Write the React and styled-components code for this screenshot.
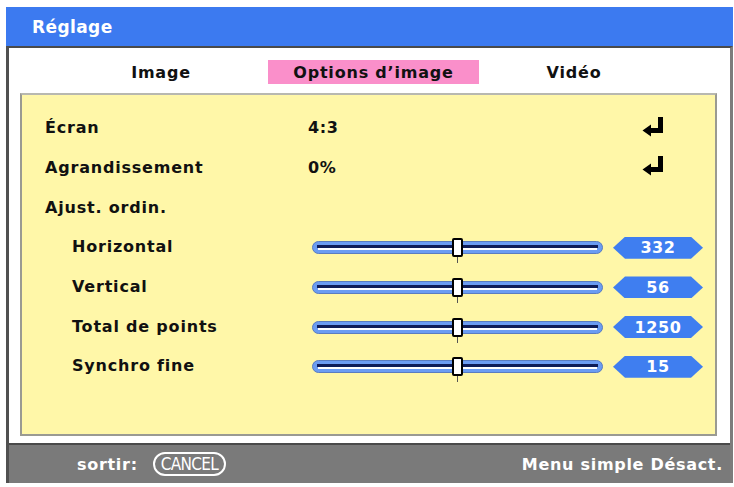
import React from "react";
import styled, { createGlobalStyle } from "styled-components";

const Global = createGlobalStyle`
  html, body { margin: 0; padding: 0; background: #ffffff; }
  body { font-family: "DejaVu Sans", "Verdana", sans-serif; }
`;

const Frame = styled.div`
  margin: 7px 1px 4px 6px;
  width: 727px;
  display: flex;
  flex-direction: column;
`;

const TitleBar = styled.div`
  height: 39px;
  background: #3c7af0;
  color: #ffffff;
  font-weight: bold;
  font-size: 17px;
  letter-spacing: 0.4px;
  display: flex;
  align-items: center;
  padding-left: 26px;
  box-sizing: border-box;
`;

const Body = styled.div`
  background: #ffffff;
  border-top: 2px solid #4a4a4a;
  border-left: 3px solid #505050;
  border-right: 3px solid #7c7c7c;
  display: flex;
  flex-direction: column;
`;

const Tabs = styled.div`
  height: 45px;
  display: flex;
  align-items: center;
`;

const Tab = styled.div`
  width: ${(p) => p.$w}px;
  margin-left: ${(p) => p.$ml}px;
  height: 24px;
  display: flex;
  align-items: center;
  justify-content: center;
  font-weight: bold;
  font-size: 16px;
  letter-spacing: 0.8px;
  color: #111;
  background: ${(p) => (p.$active ? "#fa8fca" : "transparent")};
  margin-top: 3px;
`;

const Panel = styled.div`
  margin: 0 13px 0 11px;
  height: 343px;
  box-sizing: border-box;
  background: #fff7a8;
  border: 2px solid #9a9a92;
  border-top-color: #b8b8b0;
  padding: 14px 0 0 23px;
  display: grid;
  grid-template-columns: 263px 1fr;
  grid-auto-rows: 39.67px;
  align-items: center;
`;

const Label = styled.div`
  font-weight: bold;
  font-size: 16px;
  letter-spacing: 0.8px;
  color: #111;
  padding-left: ${(p) => (p.$sub ? 27 : 0)}px;
  transform: translateY(-1px);
`;

const Cell = styled.div`
  display: flex;
  align-items: center;
  height: 100%;
`;

const Value = styled.div`
  font-weight: bold;
  font-size: 16px;
  letter-spacing: 0.6px;
  color: #111;
  width: 335px;
  transform: translateY(-1px);
`;

const EnterIcon = styled.svg`
  width: 24px;
  height: 20px;
  margin-left: -2px;
  transform: translateY(-2px);
`;

const Track = styled.div`
  position: relative;
  margin-left: 4px;
  width: 291px;
  height: 13px;
  box-sizing: border-box;
  border-radius: 7px;
  background: #6b9cf2;
  border: 1px solid #5a7cc0;
  &::before {
    content: "";
    position: absolute;
    left: 4px;
    right: 4px;
    top: 3px;
    height: 3px;
    background: #0e1c58;
  }
  &::after {
    content: "";
    position: absolute;
    left: 5px;
    right: 5px;
    top: 6px;
    height: 2px;
    background: #ffffff;
  }
`;

const Thumb = styled.div`
  position: absolute;
  left: ${(p) => p.$pos}px;
  top: -4px;
  width: 7px;
  height: 15px;
  background: #ffffff;
  border: 2px solid #000;
  border-radius: 2px;
  z-index: 2;
  &::after {
    content: "";
    position: absolute;
    left: 3px;
    top: 17px;
    width: 1px;
    height: 6px;
    background: #555;
  }
`;

const Badge = styled.div`
  margin-left: 10px;
  width: 90px;
  height: 22px;
  background: #3f7ef0;
  clip-path: polygon(0 50%, 12px 0, calc(100% - 12px) 0, 100% 50%, calc(100% - 12px) 100%, 12px 100%);
  color: #fff;
  font-weight: bold;
  font-size: 16px;
  letter-spacing: 0.6px;
  display: flex;
  align-items: center;
  justify-content: center;
`;

const Gap = styled.div`
  height: 7px;
`;

const Footer = styled.div`
  height: 38px;
  background: #7a7a7a;
  border-top: 2px solid #4a4a4a;
  display: flex;
  align-items: center;
  padding: 0 7px 0 68px;
  color: #fff;
  font-weight: bold;
  font-size: 16px;
  letter-spacing: 0.7px;
`;

const Exit = styled.div`
  display: flex;
  align-items: center;
  gap: 15px;
`;

const Pill = styled.div`
  border: 2px solid #fff;
  border-radius: 12px;
  height: 20px;
  padding: 0 6px;
  display: flex;
  align-items: center;
  font-family: "DejaVu Sans Condensed", "DejaVu Sans", sans-serif;
  font-weight: normal;
  font-size: 17px;
  letter-spacing: -0.7px;
`;

const Spacer = styled.div`
  flex: 1;
`;

const Enter = () => (
  <EnterIcon viewBox="0 0 24 20">
    <path d="M17 0 H22 V16 H10 V19.5 L1.5 13.5 L10 7.5 V11 H17 Z" fill="#000" />
  </EnterIcon>
);

const Slider = ({ pos, value }) => (
  <Cell>
    <Track>
      <Thumb $pos={pos} />
    </Track>
    <Badge>{value}</Badge>
  </Cell>
);

const sliders = [
  ["Horizontal", "332"],
  ["Vertical", "56"],
  ["Total de points", "1250"],
  ["Synchro fine", "15"],
];

export default function App() {
  return (
    <>
      <Global />
      <Frame>
        <TitleBar>Réglage</TitleBar>
        <Body>
          <Tabs>
            <Tab $w={150} $ml={77}>Image</Tab>
            <Tab $w={211} $ml={32} $active>Options d’image</Tab>
            <Tab $w={160} $ml={15}>Vidéo</Tab>
          </Tabs>
          <Panel>
            <Label>Écran</Label>
            <Cell>
              <Value>4:3</Value>
              <Enter />
            </Cell>
            <Label>Agrandissement</Label>
            <Cell>
              <Value>0%</Value>
              <Enter />
            </Cell>
            <Label>Ajust. ordin.</Label>
            <Cell />
            {sliders.map(([l, v]) => (
              <React.Fragment key={l}>
                <Label $sub>{l}</Label>
                <Slider pos={139} value={v} />
              </React.Fragment>
            ))}
          </Panel>
          <Gap />
          <Footer>
            <Exit>
              <span>sortir:</span>
              <Pill>CANCEL</Pill>
            </Exit>
            <Spacer />
            <span>Menu simple Désact.</span>
          </Footer>
        </Body>
      </Frame>
    </>
  );
}
